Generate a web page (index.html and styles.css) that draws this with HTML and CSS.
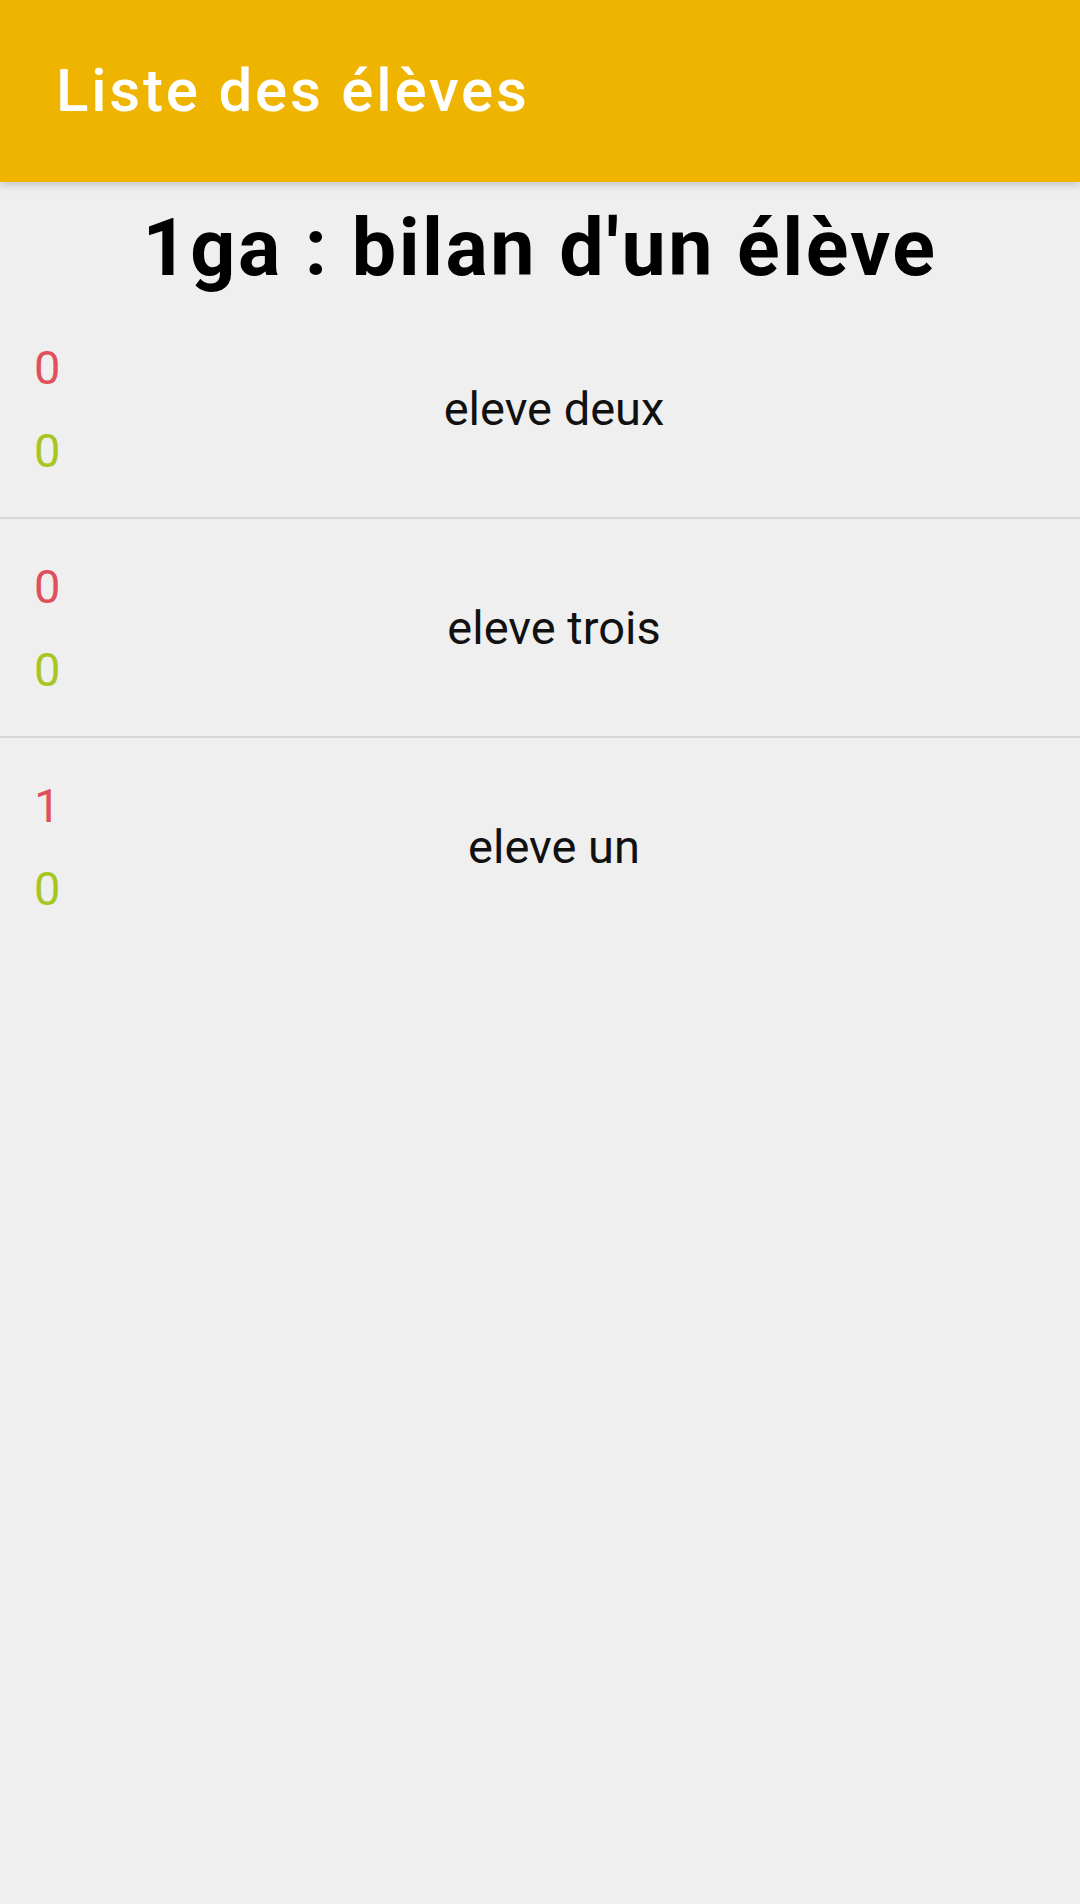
FILE: index.html
```html
<!DOCTYPE html>
<html lang="fr">
<head>
<meta charset="utf-8">
<title>Liste des élèves</title>
<link rel="stylesheet" href="styles.css">
</head>
<body>
<header class="appbar">
  <h1 class="appbar-title">Liste des élèves</h1>
</header>
<main class="content">
  <h2 class="page-title">1ga : bilan d'un élève</h2>
  <ul class="list">
    <li class="row">
      <div class="scores"><span class="neg">0</span><span class="pos">0</span></div>
      <div class="name">eleve deux</div>
    </li>
    <li class="row">
      <div class="scores"><span class="neg">0</span><span class="pos">0</span></div>
      <div class="name">eleve trois</div>
    </li>
    <li class="row">
      <div class="scores"><span class="neg">1</span><span class="pos">0</span></div>
      <div class="name">eleve un</div>
    </li>
  </ul>
</main>
</body>
</html>
```

FILE: styles.css
```css
html, body {
  margin: 0;
  padding: 0;
}
body {
  width: 1080px;
  height: 1904px;
  background: #efefef;
  font-family: Roboto, "Noto Sans", "Liberation Sans", sans-serif;
  color: #111;
  overflow: hidden;
}
.appbar {
  height: 182px;
  background: #efb400;
  display: flex;
  align-items: center;
  padding-left: 56px;
  box-sizing: border-box;
  position: relative;
  z-index: 1;
  box-shadow: 0 3px 8px rgba(0, 0, 0, 0.18);
}
.appbar-title {
  margin: 0;
  margin-top: -2px;
  font-size: 60px;
  font-weight: 500;
  color: #ffffff;
  letter-spacing: 2.8px;
}
.content {
  display: flex;
  flex-direction: column;
}
.page-title {
  margin: 0;
  padding-top: 20px;
  height: 98px;
  font-size: 79px;
  line-height: 92px;
  font-weight: 700;
  text-align: center;
  color: #000;
  letter-spacing: 2.5px;
}
.list {
  list-style: none;
  margin: 0;
  padding: 0;
}
.row {
  height: 217px;
  display: flex;
  align-items: center;
  border-bottom: 2px solid #d8d8d8;
  box-sizing: content-box;
}
.row:last-child {
  border-bottom: none;
}
.scores {
  display: flex;
  flex-direction: column;
  gap: 28px;
  padding-left: 34px;
  width: 28px;
  font-size: 47px;
  line-height: 55px;
}
.neg {
  color: #e0505a;
}
.pos {
  color: #a6c622;
}
.name {
  flex: 1;
  text-align: center;
  font-size: 47px;
  line-height: 55px;
  color: #111;
  padding-right: 34px;
}
```
